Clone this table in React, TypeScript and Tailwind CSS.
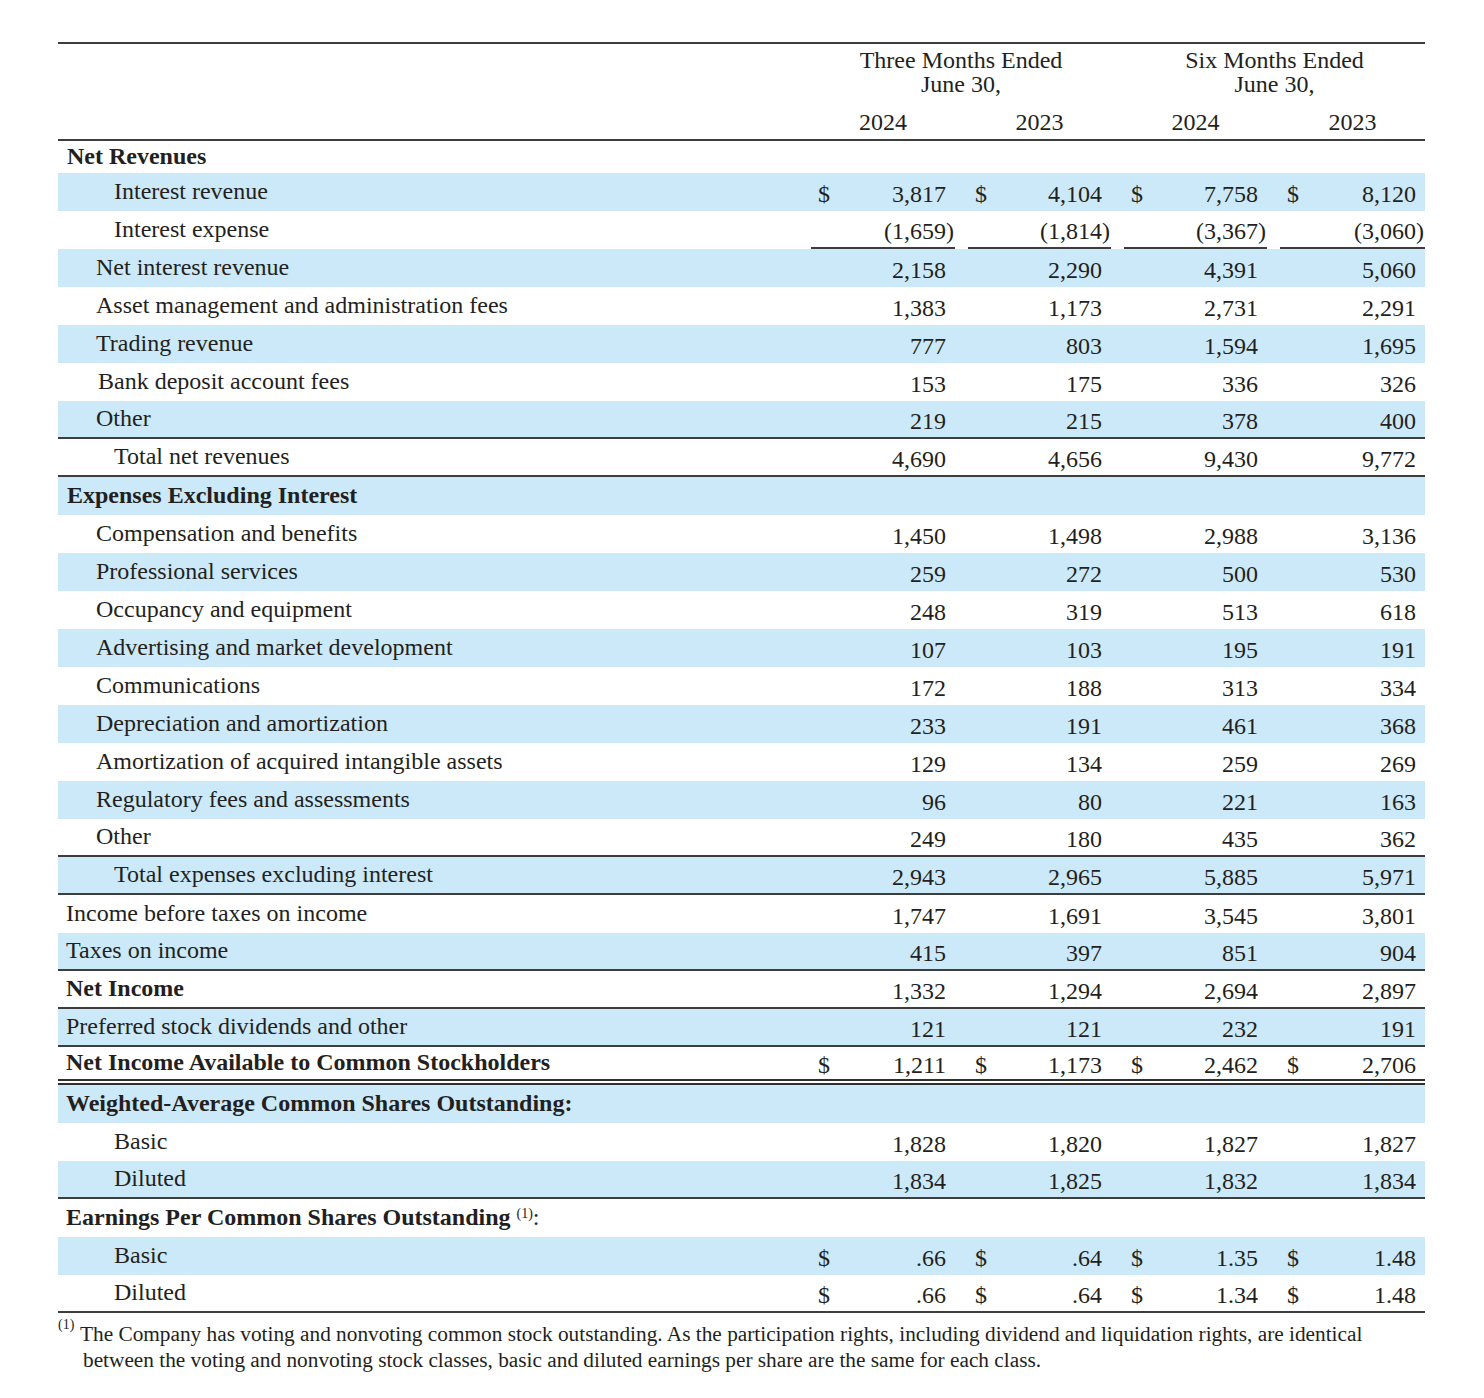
import React from "react";

type Row = {
  label: string;
  indent: number;
  bold?: boolean;
  blue?: boolean;
  vals?: string[];
  dollar?: boolean;
  line?: "single" | "double";
  underline?: boolean;
  note?: boolean;
};

const ROWS: Row[] = [
  { label: "Interest revenue", indent: 56, blue: true, dollar: true, vals: ["3,817", "4,104", "7,758", "8,120"] },
  { label: "Interest expense", indent: 56, underline: true, vals: ["(1,659)", "(1,814)", "(3,367)", "(3,060)"] },
  { label: "Net interest revenue", indent: 38, blue: true, vals: ["2,158", "2,290", "4,391", "5,060"] },
  { label: "Asset management and administration fees", indent: 38, vals: ["1,383", "1,173", "2,731", "2,291"] },
  { label: "Trading revenue", indent: 38, blue: true, vals: ["777", "803", "1,594", "1,695"] },
  { label: "Bank deposit account fees", indent: 40, vals: ["153", "175", "336", "326"] },
  { label: "Other", indent: 38, blue: true, line: "single", vals: ["219", "215", "378", "400"] },
  { label: "Total net revenues", indent: 56, line: "single", vals: ["4,690", "4,656", "9,430", "9,772"] },
  { label: "Expenses Excluding Interest", indent: 9, bold: true, blue: true },
  { label: "Compensation and benefits", indent: 38, vals: ["1,450", "1,498", "2,988", "3,136"] },
  { label: "Professional services", indent: 38, blue: true, vals: ["259", "272", "500", "530"] },
  { label: "Occupancy and equipment", indent: 38, vals: ["248", "319", "513", "618"] },
  { label: "Advertising and market development", indent: 38, blue: true, vals: ["107", "103", "195", "191"] },
  { label: "Communications", indent: 38, vals: ["172", "188", "313", "334"] },
  { label: "Depreciation and amortization", indent: 38, blue: true, vals: ["233", "191", "461", "368"] },
  { label: "Amortization of acquired intangible assets", indent: 38, vals: ["129", "134", "259", "269"] },
  { label: "Regulatory fees and assessments", indent: 38, blue: true, vals: ["96", "80", "221", "163"] },
  { label: "Other", indent: 38, line: "single", vals: ["249", "180", "435", "362"] },
  { label: "Total expenses excluding interest", indent: 56, blue: true, line: "single", vals: ["2,943", "2,965", "5,885", "5,971"] },
  { label: "Income before taxes on income", indent: 8, vals: ["1,747", "1,691", "3,545", "3,801"] },
  { label: "Taxes on income", indent: 8, blue: true, line: "single", vals: ["415", "397", "851", "904"] },
  { label: "Net Income", indent: 8, bold: true, line: "single", vals: ["1,332", "1,294", "2,694", "2,897"] },
  { label: "Preferred stock dividends and other", indent: 8, blue: true, line: "single", vals: ["121", "121", "232", "191"] },
  { label: "Net Income Available to Common Stockholders", indent: 8, bold: true, dollar: true, line: "double", vals: ["1,211", "1,173", "2,462", "2,706"] },
  { label: "Weighted-Average Common Shares Outstanding:", indent: 8, bold: true, blue: true },
  { label: "Basic", indent: 56, vals: ["1,828", "1,820", "1,827", "1,827"] },
  { label: "Diluted", indent: 56, blue: true, line: "single", vals: ["1,834", "1,825", "1,832", "1,834"] },
  { label: "Earnings Per Common Shares Outstanding", indent: 8, bold: true, note: true },
  { label: "Basic", indent: 56, blue: true, dollar: true, vals: [".66", ".64", "1.35", "1.48"] },
  { label: "Diluted", indent: 56, dollar: true, line: "single", vals: [".66", ".64", "1.34", "1.48"] },
];

// widths + left gaps of the four amount columns
const CELL = ["w-[144px]", "ml-[13px] w-[143px]", "ml-[13px] w-[143px]", "ml-[13px] w-[145px]"];

function Amount({ v }: { v: string }) {
  // closing paren hangs past the column edge, like the printed statement
  if (v.startsWith("(")) {
    return (
      <span>
        {v.slice(0, -1)}
        <span className="inline-block w-0">)</span>
      </span>
    );
  }
  return <span>{v}</span>;
}

function TableRow({ row }: { row: Row }) {
  const lineCls =
    row.line === "double"
      ? "border-b-[6px] border-double border-[#2f2f2f]"
      : row.line === "single"
        ? "border-b-2 border-[#3d3d3d]"
        : "";
  return (
    <div className={`flex h-[38px] ${row.blue ? "bg-[#cce9f9]" : ""} ${lineCls}`}>
      <div
        className={`flex w-[753px] shrink-0 items-center pb-[3px] ${row.bold ? "font-bold" : ""}`}
        style={{ paddingLeft: row.indent }}
      >
        {row.label}
        {row.note && (
          <span className="font-normal">
            <sup className="ml-[6px] text-[14px]">(1)</sup>:
          </span>
        )}
      </div>
      {row.vals &&
        row.vals.map((v, i) => (
          <div
            key={i}
            className={`flex h-full shrink-0 items-center justify-between pl-[7px] pr-[9px] pt-[4px] ${CELL[i]} ${
              row.underline ? "border-b-2 border-[#3d3d3d]" : ""
            }`}
          >
            <span>{row.dollar ? "$" : ""}</span>
            <Amount v={v} />
          </div>
        ))}
    </div>
  );
}

export default function App() {
  return (
    <div className="min-h-[1398px] w-[1484px] bg-white pl-[58px] pr-[59px] pt-[42px] font-['Liberation_Serif',serif] text-[24px] leading-none text-[#231f20]">
      {/* column headings */}
      <div className="flex h-[99px] flex-col border-y-2 border-[#3d3d3d]">
        <div className="mt-[4px] flex leading-[24px]">
          <div className="w-[753px] shrink-0" />
          <div className="w-[300px] shrink-0 text-center">
            Three Months Ended
            <br />
            June 30,
          </div>
          <div className="ml-[13px] w-[301px] shrink-0 text-center">
            Six Months Ended
            <br />
            June 30,
          </div>
        </div>
        <div className="mt-[14px] flex leading-[24px]">
          <div className="w-[753px] shrink-0" />
          {["2024", "2023", "2024", "2023"].map((y, i) => (
            <div key={i} className={`shrink-0 text-center ${CELL[i]}`}>
              {y}
            </div>
          ))}
        </div>
      </div>

      <div className="flex h-[32px] items-center pb-[2px] pl-[9px] font-bold">Net Revenues</div>

      {ROWS.map((r, i) => (
        <TableRow key={i} row={r} />
      ))}

      {/* footnote */}
      <div className="mt-[8px] flex text-[21.3px] leading-[26px]">
        <sup className="w-[22px] shrink-0 pt-[4px] text-[14px] leading-none">(1)</sup>
        <p>
          The Company has voting and nonvoting common stock outstanding. As the participation rights, including dividend and liquidation rights, are identical
          <br />
          <span className="pl-[3px]">
            between the voting and nonvoting stock classes, basic and diluted earnings per share are the same for each class.
          </span>
        </p>
      </div>
    </div>
  );
}
